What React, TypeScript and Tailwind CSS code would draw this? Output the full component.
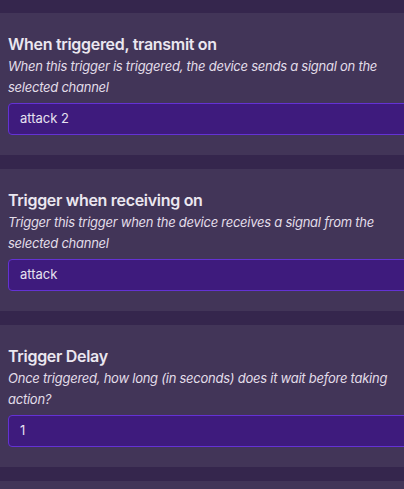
const fields = [
  {
    title: "When triggered, transmit on",
    desc: "When this trigger is triggered, the device sends a signal on the selected channel",
    value: "attack 2",
  },
  {
    title: "Trigger when receiving on",
    desc: "Trigger this trigger when the device receives a signal from the selected channel",
    value: "attack",
  },
  {
    title: "Trigger Delay",
    desc: "Once triggered, how long (in seconds) does it wait before taking action?",
    value: "1",
  },
];

function FieldCard({ title, desc, value }: { title: string; desc: string; value: string }) {
  return (
    <div className="bg-[#423558] pl-2 pt-[19px] pb-5 w-[440px] shrink-0">
      <h2 className="text-[16px] leading-6 font-semibold text-[#ebe7f0] tracking-[-0.3px]">{title}</h2>
      <p className="text-[13px] leading-[21px] italic text-[#e2dde9] tracking-[-0.25px] w-[390px]">{desc}</p>
      <div className="mt-[5px] h-8 rounded-[4px] border border-[#6432d4] bg-[#3e1b7d] flex items-center pl-[11px] text-[13px] text-[#e6e1f0]">
        {value}
      </div>
    </div>
  );
}

export default function App() {
  return (
    <div
      className="w-[404px] h-[489px] overflow-hidden bg-[#35264d] pt-[13px] flex flex-col gap-[14px]"
      style={{ fontFamily: "Inter, 'Noto Sans', sans-serif" }}
    >
      {fields.map((f) => (
        <FieldCard key={f.title} {...f} />
      ))}
      <div className="bg-[#423558] h-10 w-[440px] shrink-0" />
    </div>
  );
}
